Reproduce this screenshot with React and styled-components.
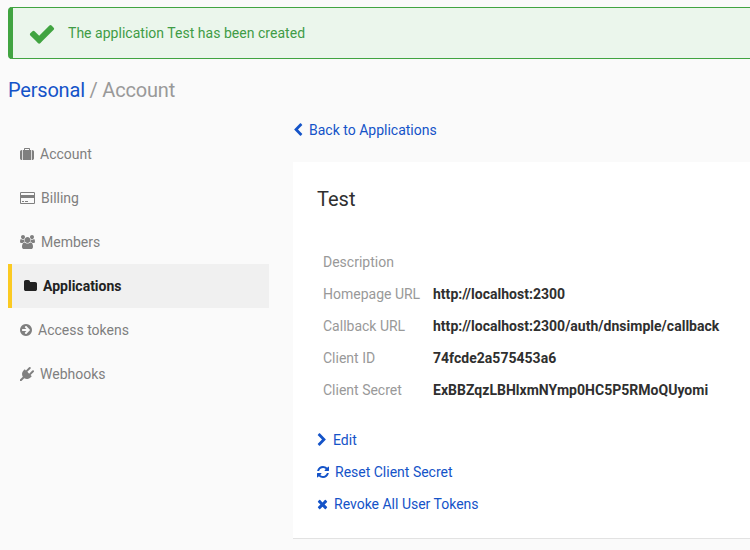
import React from "react";
import styled, { createGlobalStyle } from "styled-components";

const GlobalStyle = createGlobalStyle`
  *, *::before, *::after { box-sizing: border-box; }
  html, body { overflow: hidden; }
  body {
    margin: 0;
    background: #fafafa;
    color: #2f2f2f;
    font-family: Roboto, "Liberation Sans", sans-serif;
    font-size: 14px;
    line-height: 20px;
  }
`;

/* Each glyph: [left edge, advance width, path, top edge] on a 1792-unit em. */
const glyphs = {
  check: [0, 1792, "M1671 566q0 40-28 68l-724 724-136 136q-28 28-68 28t-68-28l-136-136-362-362q-28-28-28-68t28-68l136-136q28-28 68-28t68 28l294 295 656-657q28-28 68-28t68 28l136 136q28 28 28 68z", -56],
  chevronLeft: [256, 1280, "M1427 301l-531 531 531 531q19 19 19 45t-19 45l-166 166q-19 19-45 19t-45-19l-742-742q-19-19-19-45t19-45l742-742q19-19 45-19t45 19l166 166q19 19 19 45t-19 45z"],
  chevronRight: [256, 1280, "M1363 877l-742 742q-19 19-45 19t-45-19l-166-166q-19-19-19-45t19-45l531-531-531-531q-19-19-19-45t19-45l166-166q19-19 45-19t45 19l742 742q19 19 19 45t-19 45z"],
  refresh: [128, 1536, "M1639 1056q0 5-1 7-64 268-268 434.5t-478 166.5q-146 0-282.5-55t-243.5-157l-129 129q-19 19-45 19t-45-19-19-45v-448q0-26 19-45t45-19h448q26 0 45 19t19 45-19 45l-137 137q71 66 161 102t187 36q134 0 250-65t186-179q11-17 53-117 8-23 30-23h192q13 0 22.5 9.5t9.5 22.5zm25-800v448q0 26-19 45t-45 19h-448q-26 0-45-19t-19-45 19-45l138-138q-148-137-349-137-134 0-250 65t-186 179q-11 17-53 117-8 23-30 23h-199q-13 0-22.5-9.5t-9.5-22.5v-7q65-268 270-434.5t480-166.5q146 0 284 55.5t245 156.5l130-129q19-19 45-19t45 19 19 45z"],
  times: [192, 1408, "M1490 1322q0 40-28 68l-136 136q-28 28-68 28t-68-28l-294-294-294 294q-28 28-68 28t-68-28l-136-136q-28-28-28-68t28-68l294-294-294-294q-28-28-28-68t28-68l136-136q28-28 68-28t68 28l294 294 294-294q28-28 68-28t68 28l136 136q28 28 28 68t-28 68l-294 294 294 294q28 28 28 68z"],
  suitcase: [0, 1792, "M640 256h512v-128h-512v128zm-352 0v1280h-64q-92 0-158-66t-66-158v-832q0-92 66-158t158-66h64zm1120 0v1280h-1024v-1280h128v-160q0-40 28-68t68-28h576q40 0 68 28t28 68v160h128zm384 224v832q0 92-66 158t-158 66h-64v-1280h64q92 0 158 66t66 158z", -128],
  card: [0, 1920, "M1760 128q66 0 113 47t47 113v1216q0 66-47 113t-113 47h-1600q-66 0-113-47t-47-113v-1216q0-66 47-113t113-47h1600zm-1600 128q-13 0-22.5 9.5t-9.5 22.5v224h1664v-224q0-13-9.5-22.5t-22.5-9.5h-1600zm1600 1280q13 0 22.5-9.5t9.5-22.5v-608h-1664v608q0 13 9.5 22.5t22.5 9.5h1600zm-1504-128v-128h256v128h-256zm384 0v-128h384v128h-384z"],
  group: [64, 1920, "M657 896q-162 5-265 128h-134q-82 0-138-40.5t-56-118.5q0-353 124-353 6 0 43.5 21t97.5 42.5 119 21.5q67 0 133-23-5 37-5 66 0 139 81 256zm1071 637q0 120-73 189.5t-194 69.5h-874q-121 0-194-69.5t-73-189.5q0-53 3.5-103.5t14-109 26.5-108.5 43-97.5 62-81 85.5-53.5 111.5-20q10 0 43 21.5t73 48 107 48 135 21.5 135-21.5 107-48 73-48 43-21.5q61 0 111.5 20t85.5 53.5 62 81 43 97.5 26.5 108.5 14 109 3.5 103.5zm-1024-1277q0 106-75 181t-181 75-181-75-75-181 75-181 181-75 181 75 75 181zm704 384q0 159-112.5 271.5t-271.5 112.5-271.5-112.5-112.5-271.5 112.5-271.5 271.5-112.5 271.5 112.5 112.5 271.5zm576 225q0 78-56 118.5t-138 40.5h-134q-103-123-265-128 81-117 81-256 0-29-5-66 66 23 133 23 59 0 119-21.5t97.5-42.5 43.5-21q124 0 124 353zm-128-609q0 106-75 181t-181 75-181-75-75-181 75-181 181-75 181 75 75 181z"],
  folder: [64, 1664, "M1728 608v704q0 92-66 158t-158 66h-1216q-92 0-158-66t-66-158v-960q0-92 66-158t158-66h320q92 0 158 66t66 158v32h672q92 0 158 66t66 158z"],
  arrowCircle: [128, 1536, "M1413 896q0-27-18-45l-91-91-362-362q-18-18-45-18t-45 18l-91 91q-18 18-18 45t18 45l189 189h-502q-26 0-45 19t-19 45v128q0 26 19 45t45 19h502l-189 189q-18 18-18 45t18 45l91 91q18 18 45 18t45-18l362-362 91-91q18-18 18-45zm251 0q0 209-103 385.5t-279.5 279.5-385.5 103-385.5-103-279.5-279.5-103-385.5 103-385.5 279.5-279.5 385.5-103 385.5 103 279.5 279.5 103 385.5z"],
  plug: [0, 1792, "M1755 453q37 38 37 90.5t-37 90.5l-401 400 150 150-160 160q-163 163-389.5 186.5t-411.5-100.5l-362 362h-181v-181l362-362q-124-185-100.5-411.5t186.5-389.5l160-160 150 150 400-401q38-37 91-37t90 37 37 90.5-37 90.5l-400 401 234 234 401-400q38-37 91-37t90 37z"],
};

const Glyph = styled.svg`
  display: block;
  flex: none;
  fill: currentColor;
  overflow: visible;
`;

function Icon({ name, size = 14 }) {
  const [left, advance, d, top = 0] = glyphs[name];
  return (
    <Glyph
      aria-hidden="true"
      width={(advance / 1792) * size}
      height={size}
      viewBox={`${left} ${top} ${advance} 1792`}
    >
      <path d={d} />
    </Glyph>
  );
}

const Page = styled.div`
  height: 550px;
  padding: 7px 0 0 8px;
  overflow: hidden;
`;

const Flash = styled.div`
  display: flex;
  align-items: center;
  gap: 12px;
  height: 52px;
  padding-left: 15px;
  border: 1px solid #41a441;
  border-left-width: 5px;
  border-right: 0;
  border-radius: 4px 0 0 4px;
  background: #ebf6ec;
  color: #41a441;
`;

const FlashText = styled.span`
  color: #3f9c46;
  letter-spacing: 0.025px;
`;

const Breadcrumb = styled.h1`
  margin: 17px 0 0;
  font-size: 20px;
  font-weight: 400;
  line-height: 28px;
  letter-spacing: -0.2px;
  color: #999;
`;

const Link = styled.a`
  color: #1453c8;
  text-decoration: none;
`;

const Columns = styled.div`
  display: grid;
  grid-template-columns: 261px 1fr;
  column-gap: 24px;
  margin-top: 16px;
`;

const SideNav = styled.nav`
  margin-top: 12px;
`;

const NavItem = styled.a`
  display: flex;
  align-items: center;
  gap: 6px;
  height: 44px;
  padding-left: 12px;
  color: ${(p) => (p.$active ? "#222" : "#7f7f7f")};
  font-weight: ${(p) => (p.$active ? 700 : 400)};
  background: ${(p) => (p.$active ? "#f0f0f0" : "transparent")};
  border-left: ${(p) => (p.$active ? "4px solid #fbca22" : "0")};
`;

const IconLink = styled(Link)`
  display: flex;
  align-items: center;
  gap: 6px;
  height: ${(p) => p.$height ?? 32}px;
`;

const Card = styled.section`
  height: 377px;
  margin-top: 22px;
  padding: 23px 24px 0;
  background: #fff;
  border-bottom: 1px solid #e2e2e2;
`;

const CardTitle = styled.h2`
  margin: 0;
  font-size: 20px;
  font-weight: 400;
  line-height: 28px;
`;

const Details = styled.dl`
  display: grid;
  grid-template-columns: 110px 1fr;
  grid-auto-rows: 32px;
  align-items: center;
  margin: 33px 0 0 6px;
`;

const Term = styled.dt`
  color: #999;
`;

const Value = styled.dd`
  margin: 0;
  font-weight: 700;
  letter-spacing: 0.02px;
`;

const Actions = styled.div`
  margin-top: 18px;
`;

const navItems = [
  { icon: "suitcase", label: "Account" },
  { icon: "card", label: "Billing" },
  { icon: "group", label: "Members" },
  { icon: "folder", label: "Applications", active: true },
  { icon: "arrowCircle", label: "Access tokens" },
  { icon: "plug", label: "Webhooks" },
];

const details = [
  ["Description", ""],
  ["Homepage URL", "http://localhost:2300"],
  ["Callback URL", "http://localhost:2300/auth/dnsimple/callback"],
  ["Client ID", "74fcde2a575453a6"],
  ["Client Secret", "ExBBZqzLBHlxmNYmp0HC5P5RMoQUyomi"],
];

export default function App() {
  return (
    <Page>
      <GlobalStyle />
      <Flash>
        <Icon name="check" size={28} />
        <FlashText>The application Test has been created</FlashText>
      </Flash>
      <Breadcrumb>
        <Link>Personal</Link> / Account
      </Breadcrumb>
      <Columns>
        <SideNav>
          {navItems.map((item) => (
            <NavItem key={item.label} $active={item.active}>
              <Icon name={item.icon} />
              {item.label}
            </NavItem>
          ))}
        </SideNav>
        <main>
          <IconLink $height={20}>
            <Icon name="chevronLeft" />
            Back to Applications
          </IconLink>
          <Card>
            <CardTitle>Test</CardTitle>
            <Details>
              {details.map(([term, value]) => (
                <React.Fragment key={term}>
                  <Term>{term}</Term>
                  <Value>{value}</Value>
                </React.Fragment>
              ))}
            </Details>
            <Actions>
              <IconLink>
                <Icon name="chevronRight" />
                Edit
              </IconLink>
              <IconLink>
                <Icon name="refresh" />
                Reset Client Secret
              </IconLink>
              <IconLink>
                <Icon name="times" />
                Revoke All User Tokens
              </IconLink>
            </Actions>
          </Card>
        </main>
      </Columns>
    </Page>
  );
}
